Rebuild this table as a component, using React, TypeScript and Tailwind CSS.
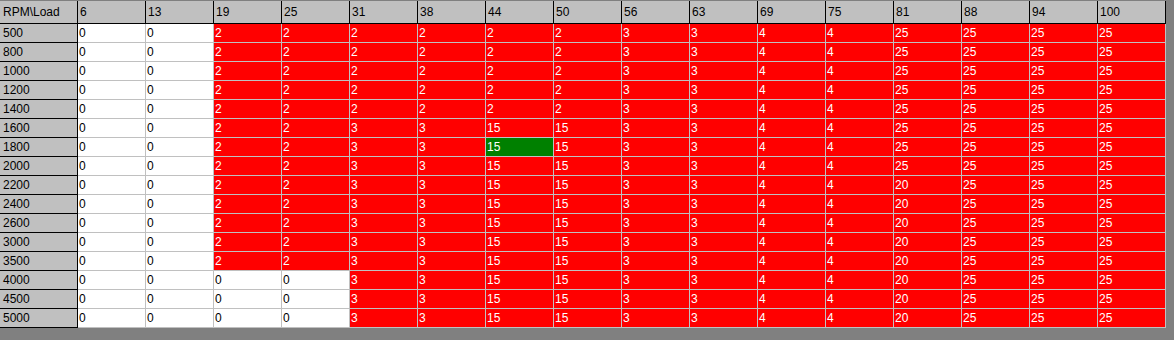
import React from "react";

const cols = [6, 13, 19, 25, 31, 38, 44, 50, 56, 63, 69, 75, 81, 88, 94, 100];
const A = [0, 0, 2, 2, 2, 2, 2, 2, 3, 3, 4, 4, 25, 25, 25, 25];
const B = [0, 0, 2, 2, 3, 3, 15, 15, 3, 3, 4, 4, 25, 25, 25, 25];
const C = [0, 0, 2, 2, 3, 3, 15, 15, 3, 3, 4, 4, 20, 25, 25, 25];
const D = [0, 0, 0, 0, 3, 3, 15, 15, 3, 3, 4, 4, 20, 25, 25, 25];
const rows: [number, number[]][] = [
  [500, A],
  [800, A],
  [1000, A],
  [1200, A],
  [1400, A],
  [1600, B],
  [1800, B],
  [2000, B],
  [2200, C],
  [2400, C],
  [2600, C],
  [3000, C],
  [3500, C],
  [4000, D],
  [4500, D],
  [5000, D],
];

const font = { fontFamily: '"Liberation Sans", Arial, sans-serif' };

export default function App() {
  return (
    <div
      className="w-[1174px] h-[340px] bg-[#808080] pt-[1px] text-[12px] leading-none overflow-hidden"
      style={font}
    >
      <div className="w-[1166px]">
        <div className="flex h-[23px]">
          <div className="w-[78px] shrink-0 bg-[#c0c0c0] border-r border-b border-black flex items-center pl-[3px] text-black">
            RPM\Load
          </div>
          {cols.map((c) => (
            <div
              key={c}
              className="w-[68px] shrink-0 bg-[#c0c0c0] border-r border-b border-black flex items-center pl-[2px] text-black"
            >
              {c}
            </div>
          ))}
        </div>
        {rows.map(([rpm, vals]) => (
          <div key={rpm} className="flex h-[19px]">
            <div className="w-[78px] shrink-0 bg-[#c0c0c0] border-r border-b border-black flex items-center pl-[3px] text-black">
              {rpm}
            </div>
            {vals.map((v, i) => {
              const green = rpm === 1800 && cols[i] === 44;
              const cls = green
                ? "bg-[#008000] text-white"
                : v === 0
                ? "bg-white text-black"
                : "bg-[#ff0000] text-white";
              return (
                <div
                  key={i}
                  className={`w-[68px] shrink-0 border-r border-b border-[#c0c0c0] flex items-center pl-[1px] ${cls}`}
                >
                  {v}
                </div>
              );
            })}
          </div>
        ))}
      </div>
    </div>
  );
}
